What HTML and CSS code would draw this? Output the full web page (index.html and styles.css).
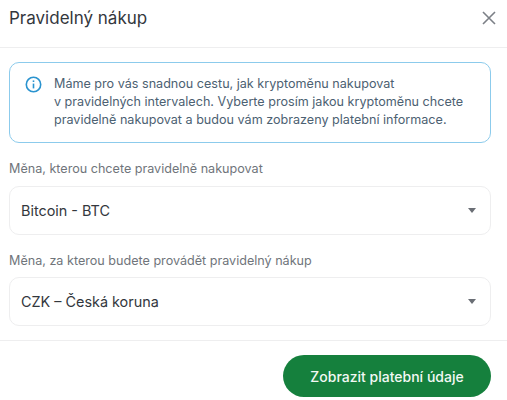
FILE: index.html
```html
<!DOCTYPE html>
<html lang="cs">
<head>
  <meta charset="UTF-8">
  <meta name="viewport" content="width=device-width, initial-scale=1.0">
  <title>Pravidelný nákup</title>
  <link rel="stylesheet" href="styles.css">
</head>
<body>
  <div class="modal">
    <div class="modal-header">
      <div class="modal-title">Pravidelný nákup</div>
      <svg class="close-icon" width="14" height="14" viewBox="0 0 14 14" fill="none" stroke="#7c8087" stroke-width="1.6">
        <path d="M1 1L13 13M13 1L1 13"/>
      </svg>
    </div>
    <div class="modal-body">
      <div class="info-box">
        <svg class="info-icon" width="17" height="17" viewBox="0 0 17 17" fill="none" stroke="#2a93cf" stroke-width="1.6">
          <circle cx="8.5" cy="8.5" r="7.2"/>
          <path d="M8.5 7.6V12.4"/>
          <path d="M8.5 4.4V6"/>
        </svg>
        <div class="info-text">Máme pro vás snadnou cestu, jak kryptoměnu nakupovat<br>v pravidelných intervalech. Vyberte prosím jakou kryptoměnu chcete<br>pravidelně nakupovat a budou vám zobrazeny platební informace.</div>
      </div>
      <div class="form-group">
        <div class="form-label">Měna, kterou chcete pravidelně nakupovat</div>
        <div class="select-box">
          <span>Bitcoin - BTC</span>
          <span class="select-arrow"></span>
        </div>
      </div>
      <div class="form-group">
        <div class="form-label">Měna, za kterou budete provádět pravidelný nákup</div>
        <div class="select-box">
          <span>CZK – Česká koruna</span>
          <span class="select-arrow"></span>
        </div>
      </div>
    </div>
    <div class="modal-footer">
      <button type="button" class="submit-btn">Zobrazit platební údaje</button>
    </div>
  </div>
</body>
</html>
```

FILE: styles.css
```css
* {
  box-sizing: border-box;
}
body {
  margin: 0;
  padding: 0;
  background-color: #ffffff;
  font-family: Inter, "Liberation Sans", sans-serif;
  overflow: hidden;
}
.modal {
  width: 507px;
  height: 400px;
  display: flex;
  flex-direction: column;
}
.modal-header {
  height: 48px;
  padding: 8px 11px 20px 9px;
  display: flex;
  justify-content: space-between;
  align-items: center;
  border-bottom: 1px solid #eeeeef;
}
.modal-title {
  font-size: 17px;
  color: #33373d;
}
.modal-body {
  padding: 14px 16px 0 9px;
  height: 292px;
}
.info-box {
  height: 81px;
  border: 1px solid #8ccbec;
  border-radius: 10px;
  padding: 12px 15px;
  display: flex;
  gap: 12px;
}
.info-icon {
  flex-shrink: 0;
  margin-top: 1px;
}
.info-text {
  font-size: 12.6px;
  line-height: 18px;
  color: #4c6172;
  white-space: nowrap;
}
.form-group {
  margin-top: 17px;
}
.form-label {
  font-size: 12.6px;
  line-height: 18px;
  color: #70757b;
  margin-bottom: 8px;
}
.form-group + .form-group .form-label {
  margin-bottom: 7px;
}
.select-box {
  height: 49px;
  border: 1px solid #eeeeef;
  border-radius: 10px;
  padding: 0 14px 1px 11px;
  display: flex;
  justify-content: space-between;
  align-items: center;
  font-size: 14.4px;
  color: #33373d;
}
.select-arrow {
  width: 0;
  height: 0;
  border-left: 4.5px solid transparent;
  border-right: 4.5px solid transparent;
  border-top: 5px solid #6a6e75;
}
.modal-footer {
  border-top: 1px solid #eeeeef;
  padding: 14px 16px 0 0;
  display: flex;
  justify-content: flex-end;
}
.submit-btn {
  width: 208px;
  height: 42px;
  background-color: #15803d;
  color: #f2f8f4;
  border: none;
  border-radius: 21px;
  font-family: Inter, "Liberation Sans", sans-serif;
  font-size: 14px;
  font-weight: 500;
}
```
